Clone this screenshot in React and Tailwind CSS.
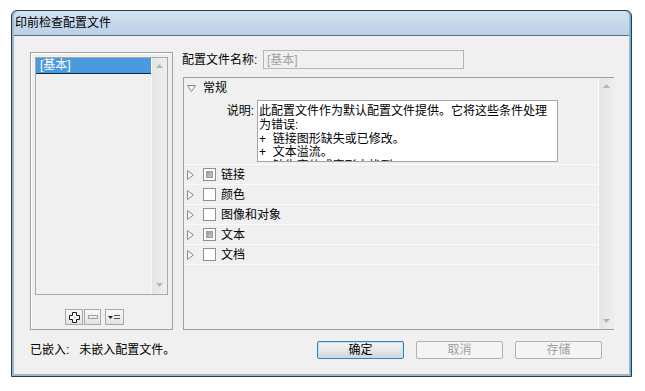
const TriRight = () => (
  <svg width="7" height="10" viewBox="0 0 7 10" className="shrink-0">
    <polygon points="0.5,0.5 6.5,5 0.5,9.5" fill="#f6f6f6" stroke="#8a8a8a" strokeWidth="1" />
  </svg>
);

const TriDown = () => (
  <svg width="9" height="7" viewBox="0 0 9 7" className="shrink-0">
    <polygon points="0.5,0.5 8.5,0.5 4.5,6.5" fill="#f6f6f6" stroke="#8a8a8a" strokeWidth="1" />
  </svg>
);

const ArrowUp = () => (
  <svg width="7" height="4" viewBox="0 0 7 4">
    <polygon points="0,4 7,4 3.5,0" fill="#b3b3b3" />
  </svg>
);

const ArrowDown = () => (
  <svg width="7" height="4" viewBox="0 0 7 4">
    <polygon points="0,0 7,0 3.5,4" fill="#b3b3b3" />
  </svg>
);

const Check = ({ mixed }) => (
  <div className="w-[13px] h-[13px] shrink-0 border border-[#8e8f8f] bg-white flex items-center justify-center">
    {mixed && (
      <div className="w-[7px] h-[7px] border border-[#9c9c9c] bg-gradient-to-br from-[#9a9a9a] to-[#c8c8c8]" />
    )}
  </div>
);

const Row = ({ label, mixed }) => (
  <div className="h-[20px] flex items-center pl-[3px] border-b border-[#fbfbfb]">
    <TriRight />
    <div className="ml-[9px]">
      <Check mixed={mixed} />
    </div>
    <span className="ml-[5px] whitespace-nowrap">{label}</span>
  </div>
);

export default function App() {
  return (
    <div className="w-[645px] h-[391px] bg-white pt-[10px] pl-[11px] font-['Liberation_Sans','Noto_Sans_CJK_SC',sans-serif] text-[12px] leading-[14px] text-black">
      <div className="w-[621px] h-[367px] flex flex-col rounded-t-[6px] border border-[#2f3c49] bg-[#9cb8d1] px-[2px] pb-[2px] shadow-[inset_-1px_0_0_#58b6dc]">
        <div className="h-[24px] flex items-center pl-[1px] bg-gradient-to-b from-[#d6e4f2] via-[#c5d7ea] to-[#bcd0e6] rounded-t-[5px] text-[12px] text-black">
          印前检查配置文件
        </div>
        <div className="flex-1 flex flex-col border-t border-[#5b6b7c] bg-[#f0f0f0] pl-[16px] pr-[15px] pt-[14px]">
          <div className="flex h-[280px]">
            {/* left group box */}
            <div className="mt-[2px] w-[143px] h-[278px] border border-[#a0a0a0] shadow-[inset_1px_1px_0_#ffffff] p-[4px] flex flex-col">
              <div className="h-[238px] w-[133px] border border-[#a8a8a8] bg-[#f0f0f0] flex">
                <div className="flex-1">
                  <div className="h-[16px] bg-[#4a9ae0] border-b border-[#16283c] text-white pl-[4px] leading-[15px]">
                    [基本]
                  </div>
                </div>
                <div className="w-[16px] bg-gradient-to-r from-[#e4e4e4] to-[#efefef] border-l border-[#f8f8f8] flex flex-col items-center justify-between pt-[6px] pb-[7px]">
                  <ArrowUp />
                  <ArrowDown />
                </div>
              </div>
              <div className="mt-[14px] ml-[30px] flex items-center">
                <div className="w-[18px] h-[16px] border border-[#a9a9a9] bg-gradient-to-b from-[#f7f7f7] to-[#e2e2e2] flex items-center justify-center">
                  <svg width="11" height="11" viewBox="0 0 11 11">
                    <polygon points="3.5,0.5 7.5,0.5 7.5,3.5 10.5,3.5 10.5,7.5 7.5,7.5 7.5,10.5 3.5,10.5 3.5,7.5 0.5,7.5 0.5,3.5 3.5,3.5" fill="#ffffff" stroke="#1a1a1a" strokeWidth="1" />
                    <rect x="4.5" y="4.5" width="2" height="2" fill="#d0d0d0" />
                  </svg>
                </div>
                <div className="ml-[1px] w-[17px] h-[16px] border border-[#a9a9a9] bg-gradient-to-b from-[#f7f7f7] to-[#e2e2e2] flex items-center justify-center">
                  <svg width="10" height="4" viewBox="0 0 10 4">
                    <rect x="0.5" y="0.5" width="9" height="3" fill="#ececec" stroke="#a0a0a0" strokeWidth="1" />
                  </svg>
                </div>
                <div className="ml-[4px] w-[19px] h-[16px] border border-[#a9a9a9] bg-gradient-to-b from-[#f7f7f7] to-[#e2e2e2] flex items-center justify-center">
                  <svg width="13" height="8" viewBox="0 0 13 8">
                    <polygon points="0,3 5,3 2.5,6" fill="#222222" />
                    <rect x="6" y="2" width="6" height="1" fill="#555555" />
                    <rect x="6" y="5" width="6" height="1" fill="#555555" />
                  </svg>
                </div>
              </div>
            </div>

            {/* right column */}
            <div className="ml-[10px] w-[431px] flex flex-col">
              <div className="h-[19px] flex items-center">
                <span className="-ml-[1px] w-[81px] whitespace-nowrap">配置文件名称:</span>
                <div className="w-[201px] h-[19px] border border-[#b5b5b5] bg-[#f0f0f0] text-[#a3a3a3] pl-[3px] flex items-center">
                  [基本]
                </div>
              </div>
              <div className="mt-[8px] h-[253px] border-y border-l border-[#a0a0a0] flex">
                <div className="flex-1 flex flex-col">
                  <div className="border-b border-[#fbfbfb]">
                    <div className="h-[20px] flex items-center pl-[3px]">
                      <TriDown />
                      <span className="ml-[7px]">常规</span>
                    </div>
                    <div className="mt-[2px] pb-[2px] flex items-start">
                      <span className="w-[70px] text-right pt-[4px] whitespace-nowrap">说明:</span>
                      <div className="ml-[3px] w-[301px] h-[62px] border border-[#a5a5a5] bg-white overflow-hidden pl-[1px] pt-[4px] leading-[13.75px] whitespace-nowrap">
                        <div>此配置文件作为默认配置文件提供。它将这些条件处理</div>
                        <div>为错误:</div>
                        <div>+&nbsp;&nbsp;链接图形缺失或已修改。</div>
                        <div>+&nbsp;&nbsp;文本溢流。</div>
                        <div>+&nbsp;&nbsp;缺失字体或字形未找到。</div>
                      </div>
                    </div>
                  </div>
                  <Row label="链接" mixed />
                  <Row label="颜色" />
                  <Row label="图像和对象" />
                  <Row label="文本" mixed />
                  <Row label="文档" />
                </div>
                <div className="w-[16px] border-l border-[#fbfbfb] bg-gradient-to-r from-[#e3e3e3] to-[#eeeeee] flex flex-col items-center justify-between pt-[6px] pb-[6px]">
                  <ArrowUp />
                  <ArrowDown />
                </div>
              </div>
            </div>
          </div>

          {/* bottom row */}
          <div className="mt-[11px] h-[18px] flex items-center">
            <span className="whitespace-nowrap">已嵌入:</span>
            <span className="ml-[10px] whitespace-nowrap">未嵌入配置文件。</span>
            <div className="ml-auto mr-[12px] flex items-center gap-[12px]">
              <div className="w-[87px] h-[18px] rounded-[2px] border border-[#3b7fb3] bg-gradient-to-b from-[#f3f3f3] via-[#e8e8e8] to-[#d2d2d2] shadow-[inset_0_0_0_1px_#b8e4f6] flex items-center justify-center">
                确定
              </div>
              <div className="w-[87px] h-[18px] rounded-[2px] border border-[#adb2b5] bg-[#f4f4f4] text-[#a0a0a0] flex items-center justify-center">
                取消
              </div>
              <div className="w-[87px] h-[18px] rounded-[2px] border border-[#adb2b5] bg-[#f4f4f4] text-[#a0a0a0] flex items-center justify-center">
                存储
              </div>
            </div>
          </div>
        </div>
      </div>
    </div>
  );
}
